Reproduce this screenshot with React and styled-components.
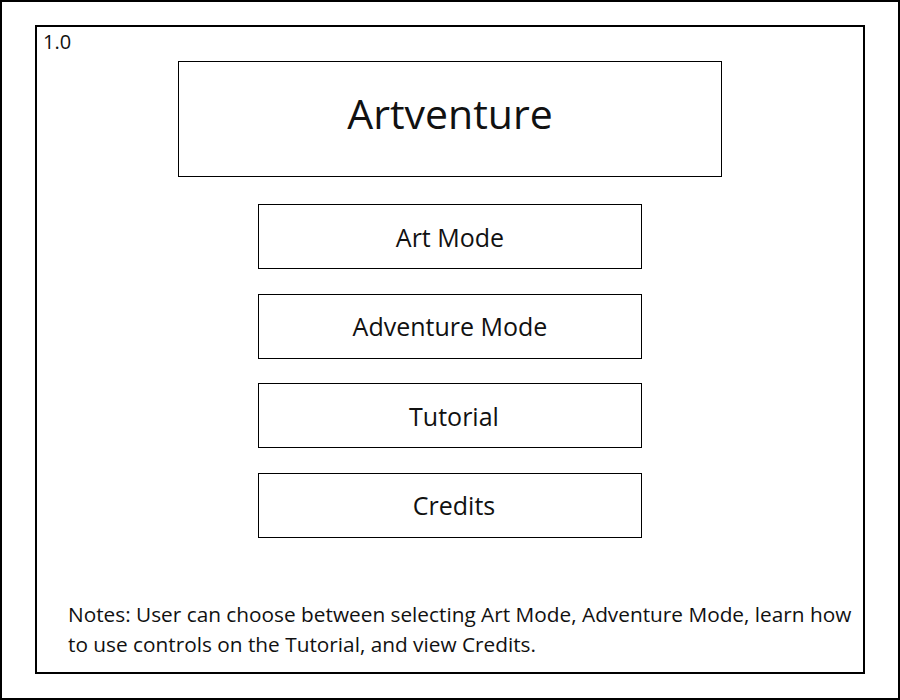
import React from 'react'
import styled, { createGlobalStyle } from 'styled-components'

const GlobalStyle = createGlobalStyle`
	html, body {
		margin: 0;
		padding: 0;
		background: #fff;
	}
	body {
		font-family: 'Open Sans', 'Noto Sans', sans-serif;
		color: #111;
	}
`

const Frame = styled.div`
	box-sizing: border-box;
	width: 900px;
	height: 700px;
	border: 2px solid #000;
	padding: 23px 33px 24px 33px;
	background: #fff;
`

const Panel = styled.div`
	box-sizing: border-box;
	height: 100%;
	border: 2px solid #000;
	display: flex;
	flex-direction: column;
	padding: 3px 0 13px 0;
`

const Version = styled.div`
	font-size: 20px;
	line-height: 24px;
	padding-left: 6px;
`

const TitleBox = styled.div`
	box-sizing: border-box;
	align-self: center;
	width: 544px;
	height: 116px;
	margin-top: 7px;
	border: 1px solid #000;
	display: flex;
	align-items: center;
	justify-content: center;
	padding-bottom: 12px;
	font-size: 41px;
`

const Menu = styled.div`
	align-self: center;
	display: flex;
	flex-direction: column;
	gap: 24.5px;
	margin-top: 27px;
`

const MenuButton = styled.div`
	box-sizing: border-box;
	width: 384px;
	height: 65px;
	border: 1px solid #000;
	display: flex;
	align-items: center;
	justify-content: center;
	font-size: 25px;
	padding-left: ${(p) => p.$shift || 0}px;
`

const Notes = styled.p`
	margin: auto 0 0 31px;
	width: 792px;
	font-size: 20.8px;
	line-height: 30px;
`

const buttons = [
	{ label: 'Art Mode', shift: 0 },
	{ label: 'Adventure Mode', shift: 0 },
	{ label: 'Tutorial', shift: 8 },
	{ label: 'Credits', shift: 8 },
]

const App = () => {
	return (
		<>
			<GlobalStyle />
			<Frame>
				<Panel>
					<Version>1.0</Version>
					<TitleBox>Artventure</TitleBox>
					<Menu>
						{buttons.map((b) => (
							<MenuButton key={b.label} $shift={b.shift}>
								{b.label}
							</MenuButton>
						))}
					</Menu>
					<Notes>
						Notes: User can choose between selecting Art Mode, Adventure Mode, learn how
						to use controls on the Tutorial, and view Credits.
					</Notes>
				</Panel>
			</Frame>
		</>
	)
}

export default App
